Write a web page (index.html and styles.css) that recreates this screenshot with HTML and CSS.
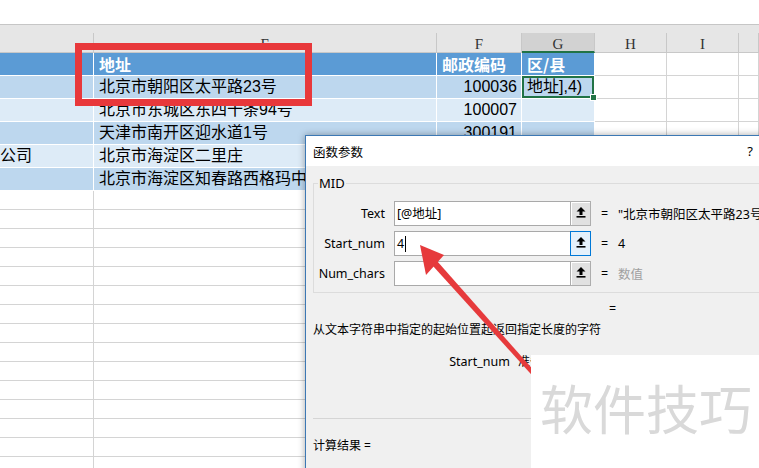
FILE: index.html
```html
<!DOCTYPE html>
<html lang="zh-CN">
<head>
<meta charset="utf-8">
<title>MID 函数参数</title>
<link rel="stylesheet" href="styles.css">
</head>
<body>
<div class="app">
  <div class="topbar"></div>
  <div class="gap-band"></div>
  <div class="sheet">
    <div class="row colhdr">
      <div class="c hc"></div>
      <div class="c hc">E</div>
      <div class="c hc">F</div>
      <div class="c hc active">G</div>
      <div class="c hc">H</div>
      <div class="c hc">I</div>
      <div class="c hc"></div>
    </div>
    <div class="row trow thead">
      <div class="c t"></div>
      <div class="c t">地址</div>
      <div class="c t">邮政编码</div>
      <div class="c t">区/县</div>
      <div class="c"></div><div class="c"></div><div class="c"></div>
    </div>
    <div class="row trow band-a">
      <div class="c t"></div>
      <div class="c t">北京市朝阳区太平路23号</div>
      <div class="c t num">100036</div>
      <div class="c t sel">地址],4)</div>
      <div class="c"></div><div class="c"></div><div class="c"></div>
    </div>
    <div class="row trow band-b">
      <div class="c t"></div>
      <div class="c t">北京市东城区东四十条94号</div>
      <div class="c t num">100007</div>
      <div class="c t"></div>
      <div class="c"></div><div class="c"></div><div class="c"></div>
    </div>
    <div class="row trow band-a">
      <div class="c t"></div>
      <div class="c t">天津市南开区迎水道1号</div>
      <div class="c t num">300191</div>
      <div class="c t"></div>
      <div class="c"></div><div class="c"></div><div class="c"></div>
    </div>
    <div class="row trow band-b">
      <div class="c t flush">公司</div>
      <div class="c t">北京市海淀区二里庄</div>
      <div class="c t num">100083</div>
      <div class="c t"></div>
      <div class="c"></div><div class="c"></div><div class="c"></div>
    </div>
    <div class="row trow band-a">
      <div class="c t"></div>
      <div class="c t">北京市海淀区知春路西格玛中心</div>
      <div class="c t num">100190</div>
      <div class="c t"></div>
      <div class="c"></div><div class="c"></div><div class="c"></div>
    </div>
    <div class="row blank"><div class="c"></div><div class="c"></div><div class="c"></div><div class="c"></div><div class="c"></div><div class="c"></div><div class="c"></div></div>
    <div class="row blank"><div class="c"></div><div class="c"></div><div class="c"></div><div class="c"></div><div class="c"></div><div class="c"></div><div class="c"></div></div>
    <div class="row blank"><div class="c"></div><div class="c"></div><div class="c"></div><div class="c"></div><div class="c"></div><div class="c"></div><div class="c"></div></div>
    <div class="row blank"><div class="c"></div><div class="c"></div><div class="c"></div><div class="c"></div><div class="c"></div><div class="c"></div><div class="c"></div></div>
    <div class="row blank"><div class="c"></div><div class="c"></div><div class="c"></div><div class="c"></div><div class="c"></div><div class="c"></div><div class="c"></div></div>
    <div class="row blank"><div class="c"></div><div class="c"></div><div class="c"></div><div class="c"></div><div class="c"></div><div class="c"></div><div class="c"></div></div>
    <div class="row blank"><div class="c"></div><div class="c"></div><div class="c"></div><div class="c"></div><div class="c"></div><div class="c"></div><div class="c"></div></div>
    <div class="row blank"><div class="c"></div><div class="c"></div><div class="c"></div><div class="c"></div><div class="c"></div><div class="c"></div><div class="c"></div></div>
    <div class="row blank"><div class="c"></div><div class="c"></div><div class="c"></div><div class="c"></div><div class="c"></div><div class="c"></div><div class="c"></div></div>
    <div class="row blank"><div class="c"></div><div class="c"></div><div class="c"></div><div class="c"></div><div class="c"></div><div class="c"></div><div class="c"></div></div>
    <div class="row blank"><div class="c"></div><div class="c"></div><div class="c"></div><div class="c"></div><div class="c"></div><div class="c"></div><div class="c"></div></div>
    <div class="row blank"><div class="c"></div><div class="c"></div><div class="c"></div><div class="c"></div><div class="c"></div><div class="c"></div><div class="c"></div></div>
    <div class="row blank"><div class="c"></div><div class="c"></div><div class="c"></div><div class="c"></div><div class="c"></div><div class="c"></div><div class="c"></div></div>
    <div class="row blank"><div class="c"></div><div class="c"></div><div class="c"></div><div class="c"></div><div class="c"></div><div class="c"></div><div class="c"></div></div>
    <div class="row blank"><div class="c"></div><div class="c"></div><div class="c"></div><div class="c"></div><div class="c"></div><div class="c"></div><div class="c"></div></div>
  </div>

  <div class="redbox"></div>

  <div class="dialog">
    <div class="dlg-title">
      <span class="dlg-name">函数参数</span>
      <span class="help">?</span>
    </div>
    <div class="dlg-body">
      <fieldset class="group">
        <legend>MID</legend>
        <div class="args">
          <span class="arg-label">Text</span>
          <div class="input">[@地址]</div>
          <div class="pick"><svg viewBox="0 0 10 11" width="10" height="11"><path d="M5 0 L9.5 4.5 L6.5 4.5 L6.5 8 L3.5 8 L3.5 4.5 L0.5 4.5 Z" fill="#000"/><rect x="0.5" y="9" width="9" height="1.6" fill="#000"/></svg></div>
          <span class="eq">=</span>
          <span class="val">"北京市朝阳区太平路23号"</span>

          <span class="arg-label">Start_num</span>
          <div class="input focus">4<span class="caret"></span></div>
          <div class="pick hot"><svg viewBox="0 0 10 11" width="10" height="11"><path d="M5 0 L9.5 4.5 L6.5 4.5 L6.5 8 L3.5 8 L3.5 4.5 L0.5 4.5 Z" fill="#000"/><rect x="0.5" y="9" width="9" height="1.6" fill="#000"/></svg></div>
          <span class="eq">=</span>
          <span class="val">4</span>

          <span class="arg-label">Num_chars</span>
          <div class="input"></div>
          <div class="pick"><svg viewBox="0 0 10 11" width="10" height="11"><path d="M5 0 L9.5 4.5 L6.5 4.5 L6.5 8 L3.5 8 L3.5 4.5 L0.5 4.5 Z" fill="#000"/><rect x="0.5" y="9" width="9" height="1.6" fill="#000"/></svg></div>
          <span class="eq">=</span>
          <span class="val muted">数值</span>
        </div>
      </fieldset>
      <div class="result-eq">=</div>
      <p class="desc">从文本字符串中指定的起始位置起返回指定长度的字符</p>
      <div class="param">
        <span class="pname">Start_num</span>
        <span class="ptext">准备提取的第一个字符的位置。Text 中第一个字符为 1</span>
      </div>
      <hr class="sep">
      <div class="calc">计算结果 =</div>
    </div>
  </div>

  <svg class="arrow" viewBox="0 0 759 468" width="759" height="468">
    <polygon points="420,245 444,255 426,275" fill="#e63a3c"/>
    <polygon points="437,261 433,266 558,404 561,401" fill="#e63a3c"/>
  </svg>

  <div class="watermark">软件技巧</div>
</div>
</body>
</html>
```

FILE: styles.css
```css
html, body {
  margin: 0;
  padding: 0;
}
body {
  width: 759px;
  height: 468px;
  overflow: hidden;
  background: #fff;
  font-family: "Liberation Sans", "Noto Sans CJK SC", sans-serif;
}
.app {
  position: relative;
  width: 759px;
  height: 468px;
  overflow: hidden;
}
.topbar {
  height: 24px;
  background: #fff;
  border-bottom: 1px solid #c6c6c6;
}
.gap-band {
  height: 8px;
  background: #e6e6e6;
}
.row {
  display: grid;
  grid-template-columns: 94px 343px 85px 73px 72px 72px 1fr;
}
.c {
  box-sizing: border-box;
  border-right: 1px solid #d4d4d4;
  border-bottom: 1px solid #d4d4d4;
  white-space: nowrap;
  overflow: visible;
  font-size: 16px;
  color: #000;
}
.colhdr .c {
  background: #e6e6e6;
  border-color: #c8c8c8;
  height: 20px;
  padding-top: 3px;
  line-height: 16px;
  text-align: center;
  font-family: "Liberation Serif", "DejaVu Serif", serif;
  font-size: 15px;
  color: #333;
}
.colhdr .c.active {
  background: #d2d2d2;
  border-bottom: 2px solid #217346;
}
.trow .c {
  height: 23px;
  line-height: 22px;
  padding: 0 4px 0 5px;
}
.trow .c.t {
  border-color: #fff;
}
.thead .c.t {
  background: #5b9bd5;
  color: #fff;
  font-weight: bold;
  font-family: "Noto Sans CJK SC", sans-serif;
}
.band-a .c.t {
  background: #bdd7ee;
}
.band-b .c.t {
  background: #ddebf7;
}
.trow .c.num {
  text-align: right;
}
.trow .c.flush {
  padding-left: 0;
}
.trow .c.sel {
  position: relative;
  box-shadow: inset 0 0 0 2px #217346;
}
.trow .c.sel::after {
  content: "";
  position: absolute;
  right: -3px;
  bottom: -3px;
  width: 5px;
  height: 5px;
  background: #217346;
  border: 1px solid #fff;
}
.blank .c {
  height: 19px;
}

/* red annotation box */
.redbox {
  position: absolute;
  left: 75px;
  top: 43px;
  width: 237px;
  height: 63px;
  box-sizing: border-box;
  border: 7px solid #e8383b;
}

/* dialog */
.dialog {
  position: absolute;
  left: 305px;
  top: 135px;
  width: 490px;
  height: 420px;
  box-sizing: border-box;
  border: 1px solid #3c78b4;
  background: #f0f0f0;
  box-shadow: 0 0 7px rgba(0, 0, 0, 0.35);
  font-family: "Noto Sans", "Noto Sans CJK SC", sans-serif;
  font-size: 12.5px;
  color: #000;
}
.dlg-title {
  display: flex;
  align-items: center;
  height: 30px;
  background: #fff;
  padding: 0 41px 0 7px;
}
.dlg-name {
  font-family: "Noto Sans CJK SC", sans-serif;
  font-size: 12.5px;
}
.help {
  margin-left: auto;
  font-size: 13px;
}
.dlg-body {
  padding: 0 7px;
}
.group {
  margin: 8px 0 0 0;
  padding: 9px 0 6px 4px;
  border: 1px solid #dcdcdc;
  min-width: 0;
}
.group legend {
  padding: 0 1px;
  font-size: 13px;
  line-height: 18px;
}
.args {
  display: grid;
  grid-template-columns: 76px 176px 21px 27px 1fr;
  grid-auto-rows: 25px;
  row-gap: 5px;
  align-items: center;
}
.arg-label {
  text-align: right;
  padding-right: 9px;
}
.input {
  box-sizing: border-box;
  height: 25px;
  border: 1px solid #a9a9a9;
  border-right: none;
  background: #fff;
  padding: 0 2px;
  line-height: 23px;
  white-space: nowrap;
  display: flex;
  align-items: center;
}
.caret {
  display: inline-block;
  width: 1px;
  height: 16px;
  background: #000;
  margin-left: 1px;
}
.pick {
  box-sizing: border-box;
  height: 25px;
  border: 1px solid #adadad;
  background: #e1e1e1;
  display: flex;
  justify-content: center;
  padding-top: 5px;
  box-shadow: inset 1px 1px 0 #fff;
}
.pick.hot {
  background: #e5f1fb;
  border-color: #0078d7;
  box-shadow: none;
}
.eq {
  text-align: center;
}
.val {
  white-space: nowrap;
}
.val.muted {
  color: #a0a0a0;
}
.result-eq {
  margin-top: 7px;
  padding-left: 296px;
  line-height: 18px;
}
.desc {
  margin: 3px 0 0 0;
  line-height: 18px;
  font-size: 12px;
}
.param {
  display: flex;
  margin-top: 14px;
  line-height: 18px;
  white-space: nowrap;
}
.pname {
  width: 197px;
  text-align: right;
  padding-right: 8px;
  flex: none;
}
.ptext {
  font-size: 12px;
}
.sep {
  margin: 47px 0 0 0;
  border: none;
  border-top: 1px solid #d5d5d5;
  height: 0;
}
.calc {
  margin-top: 18px;
  line-height: 18px;
  font-size: 12px;
}

/* annotation arrow */
.arrow {
  position: absolute;
  left: 0;
  top: 0;
  pointer-events: none;
}

/* watermark */
.watermark {
  position: absolute;
  left: 531px;
  top: 355px;
  right: 0;
  bottom: 0;
  background: #fff;
  padding: 26px 0 0 9px;
  font-family: "Noto Sans CJK SC", sans-serif;
  font-size: 53px;
  line-height: 1;
  color: #d9d9d9;
  white-space: nowrap;
}
```
